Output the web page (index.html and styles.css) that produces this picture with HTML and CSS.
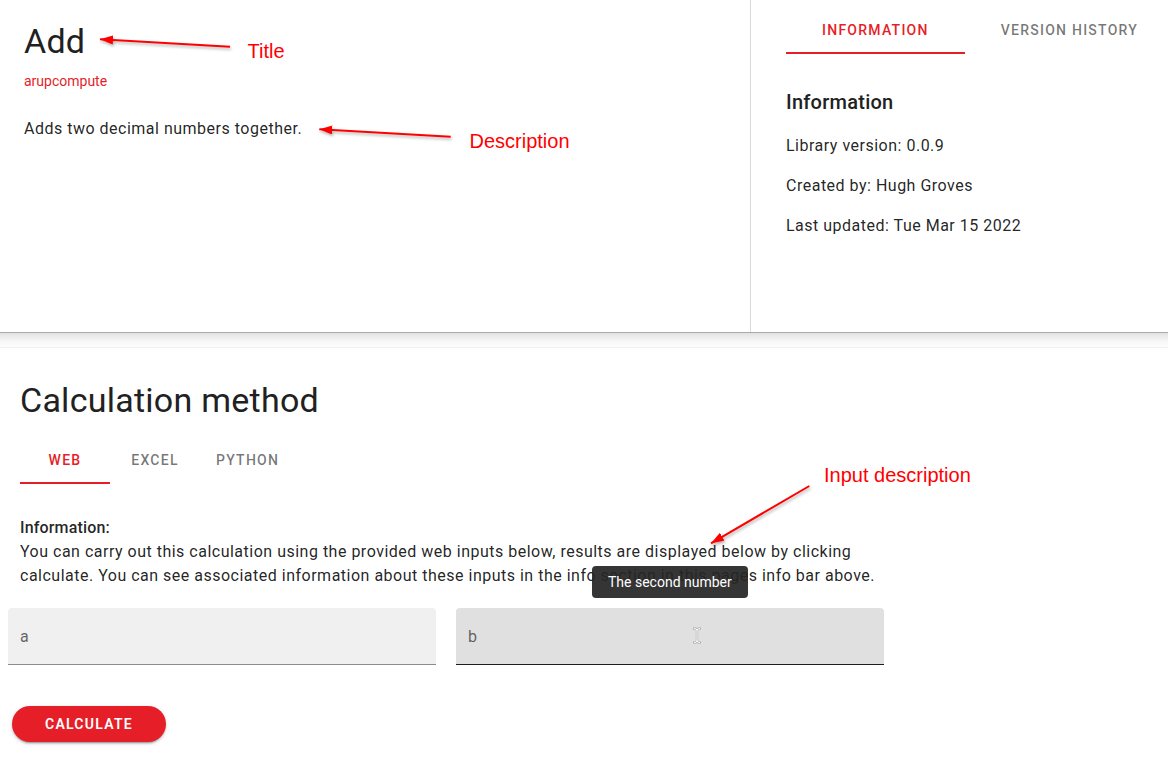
FILE: index.html
```html
<!DOCTYPE html>
<html lang="en">
<head>
  <meta charset="UTF-8" />
  <title>Add - arupcompute</title>
  <link rel="stylesheet" href="styles.css">
</head>
<body>
<div class="app">

  <section class="top">
    <div class="summary">
      <h1 class="title">Add</h1>
      <div class="library">arupcompute</div>
      <p class="desc">Adds two decimal numbers together.</p>
    </div>
    <aside class="side">
      <nav class="tabs side-tabs">
        <div class="tab active">Information</div>
        <div class="tab">Version history</div>
      </nav>
      <h2 class="side-title">Information</h2>
      <p>Library version: 0.0.9</p>
      <p>Created by: Hugh Groves</p>
      <p>Last updated: Tue Mar 15 2022</p>
    </aside>
  </section>

  <div class="gap"></div>

  <section class="calc">
    <h2 class="calc-title">Calculation method</h2>
    <nav class="tabs method-tabs">
      <div class="tab active">Web</div>
      <div class="tab">Excel</div>
      <div class="tab">Python</div>
    </nav>

    <div class="info">
      <div class="info-label">Information:</div>
      <div>You can carry out this calculation using the provided web inputs below, results are displayed below by clicking calculate. You can see associated information about these inputs in the info section in this pages info bar above.</div>
    </div>

    <div class="fields">
      <div class="field">
        <span class="field-label">a</span>
      </div>
      <div class="field hover">
        <span class="field-label">b</span>
        <div class="tooltip">The second number</div>
        <svg class="ibeam" width="8" height="17" viewBox="0 0 8 17">
          <path d="M1 1.5 Q4 1.5 4 3.5 Q4 1.5 7 1.5 M4 3.5 V13.5 M1 15.5 Q4 15.5 4 13.5 Q4 15.5 7 15.5" fill="none" stroke="#b0b0b0" stroke-width="2.4" stroke-linecap="round"/>
          <path d="M1 1.5 Q4 1.5 4 3.5 Q4 1.5 7 1.5 M4 3.5 V13.5 M1 15.5 Q4 15.5 4 13.5 Q4 15.5 7 15.5" fill="none" stroke="#fff" stroke-width="1"/>
        </svg>
      </div>
    </div>

    <button class="calc-btn">Calculate</button>
  </section>

  <!-- annotation layer drawn over the screenshot -->
  <svg class="notes" width="1168" height="766" viewBox="0 0 1168 766">
    <defs>
      <marker id="head" markerUnits="userSpaceOnUse" markerWidth="14" markerHeight="10" refX="13" refY="4.5" orient="auto">
        <path d="M0 0 L13 4.5 L0 9 Z" fill="#f00"/>
      </marker>
    </defs>
    <g class="arrows">
      <line x1="230" y1="46.7" x2="100" y2="39.3" marker-end="url(#head)"/>
      <line x1="450.7" y1="136.7" x2="319.3" y2="129.3" marker-end="url(#head)"/>
      <line x1="809.3" y1="486" x2="711" y2="543.3" marker-end="url(#head)"/>
    </g>
    <text x="247.5" y="58.3">Title</text>
    <text x="469.5" y="147.7">Description</text>
    <text x="824" y="481.7">Input description</text>
  </svg>
</div>
</body>
</html>
```

FILE: styles.css
```css
body { margin: 0; font-family: Roboto, "Noto Sans", sans-serif; background: #fff; color: rgba(0,0,0,.87); }
.app { position: relative; width: 1168px; height: 766px; overflow: hidden; }

/* top card */
.top { display: flex; height: 332px; border-bottom: 1px solid #a9a9a9; }
.summary { flex: 0 0 751px; box-sizing: border-box; border-right: 1px solid #d9d9d9; padding: 21px 24px; }
.title { margin: 0; font-size: 34px; line-height: 40px; font-weight: 400; letter-spacing: .0073529412em; color: #212121; }
.library { margin-top: 10px; font-size: 14px; line-height: 20px; color: #e61e28; }
.desc { margin: 26px 0 0; font-size: 16px; line-height: 24px; letter-spacing: .03125em; }

.side { flex: 1; min-width: 0; overflow: hidden; padding: 5px 0 0 35px; }
.side p { margin: 0 0 16px; font-size: 16px; line-height: 24px; letter-spacing: .03125em; }
.side-title { margin: 32px 0 16px; font-size: 20px; line-height: 32px; font-weight: 500; letter-spacing: .0125em; color: #212121; }

/* tabs */
.tabs { display: flex; height: 48px; }
.tab {
  flex-shrink: 0;
  display: flex;
  align-items: center;
  justify-content: center;
  font-size: 14px;
  font-weight: 500;
  letter-spacing: .0892857143em;
  text-transform: uppercase;
  color: rgba(0,0,0,.54);
}
.tab.active { color: #e61e28; box-shadow: inset 0 -2px 0 #e61e28; }
.side-tabs { height: 49px; }
.side-tabs .tab { padding: 0 36px; }
.method-tabs { margin: 16px 0 0 20px; }
.method-tabs .tab { min-width: 90px; padding: 0 16px; box-sizing: border-box; }

/* shadow strip between cards */
.gap { height: 14px; background: linear-gradient(#e2e2e2, #f7f7f7 60%, #fdfdfd); border-bottom: 1px solid #f1f1f1; }

/* calculation card */
.calc { padding-top: 32px; }
.calc-title { margin: 0; padding-left: 20px; font-size: 34px; line-height: 40px; font-weight: 400; letter-spacing: .0073529412em; color: #212121; }

.info { margin-top: 32px; padding-left: 20px; width: 864px; font-size: 16px; line-height: 24px; letter-spacing: .03125em; }
.info-label { font-weight: 500; letter-spacing: .01em; }

.fields { display: flex; gap: 20px; width: 876px; margin: 20px 0 0 8px; }
.field {
  position: relative;
  flex: 1;
  height: 56px;
  display: flex;
  align-items: center;
  padding: 0 12px;
  background: #f0f0f0;
  border-bottom: 1px solid rgba(0,0,0,.42);
  border-radius: 4px 4px 0 0;
}
.field.hover { background: #e0e0e0; border-bottom-color: rgba(0,0,0,.87); }
.field-label { font-size: 16px; color: rgba(0,0,0,.6); }

.tooltip {
  position: absolute;
  left: 136px;
  bottom: calc(100% + 10px);
  padding: 5px 16px;
  font-size: 14px;
  line-height: 22px;
  color: #fff;
  white-space: nowrap;
  background: rgba(38,38,38,.93);
  border-radius: 4px;
}
.ibeam { position: absolute; left: 237px; top: 19px; }

.calc-btn {
  display: block;
  margin: 41px 0 0 12px;
  height: 36px;
  padding: 0 33px;
  border: none;
  border-radius: 18px;
  background: #e61e28;
  color: #fff;
  font-family: Roboto, sans-serif;
  font-size: 14px;
  font-weight: 600;
  letter-spacing: .0892857143em;
  text-transform: uppercase;
  box-shadow: 0 3px 1px -2px rgba(0,0,0,.2), 0 2px 2px 0 rgba(0,0,0,.14), 0 1px 5px 0 rgba(0,0,0,.12);
  cursor: pointer;
}

/* annotations */
.notes { position: absolute; top: 0; left: 0; pointer-events: none; }
.notes .arrows line { stroke: #f00; stroke-width: 2; }
.notes .arrows { filter: drop-shadow(1px 2px 1.5px rgba(0,0,0,.3)); }
.notes text { font-family: "Liberation Sans", Arial, sans-serif; font-size: 20px; fill: #f00; }
```
